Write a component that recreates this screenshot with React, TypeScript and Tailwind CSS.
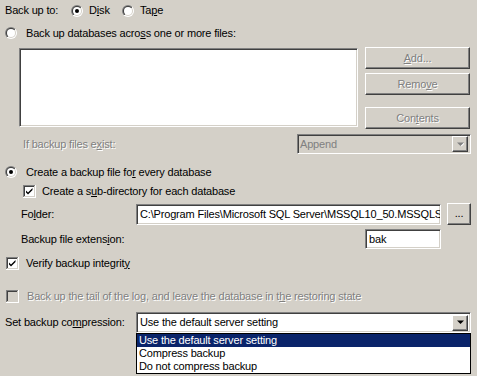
import React from 'react';

const raised =
  'border border-t-white border-l-white border-r-[#404040] border-b-[#404040] shadow-[inset_-1px_-1px_0_#808080]';
const sunken =
  'border border-t-[#808080] border-l-[#808080] border-r-white border-b-white shadow-[inset_1px_1px_0_#404040,inset_-1px_-1px_0_#d4d0c8]';
const dim = 'text-[#808080] [text-shadow:1px_1px_0_#ffffff]';

const U = ({ children }: { children: React.ReactNode }) => <span className="underline underline-offset-[1px]">{children}</span>;

const Radio = ({ checked = false }: { checked?: boolean }) => (
  <svg width="12" height="12" viewBox="0 0 12 12" className="shrink-0">
    <circle cx="6" cy="6" r="6" fill="url(#rOuter)" />
    <circle cx="6" cy="6" r="5" fill="url(#rInner)" />
    <circle cx="6" cy="6" r="4" fill="#ffffff" />
    {checked && <circle cx="6" cy="6" r="2" fill="#000000" />}
  </svg>
);

const Check = ({ checked = false, disabled = false }: { checked?: boolean; disabled?: boolean }) => (
  <svg width="13" height="13" viewBox="0 0 13 13" className="shrink-0">
    <rect x="0" y="0" width="13" height="13" fill="#ffffff" />
    <rect x="0" y="0" width="12" height="12" fill="#808080" />
    <rect x="1" y="1" width="11" height="11" fill="#d4d0c8" />
    <rect x="1" y="1" width="10" height="10" fill="#404040" />
    <rect x="2" y="2" width="9" height="9" fill={disabled ? '#d4d0c8' : '#ffffff'} />
    {checked && <path d="M3 5.5 L5 7.5 L9.5 3 L9.5 5 L5 9.5 L3 7.5 Z" fill="#000000" />}
  </svg>
);

const Arrow = ({ disabled = false }: { disabled?: boolean }) => (
  <div className={`w-[16px] h-[16px] bg-[#d4d0c8] flex items-center justify-center shrink-0 ${raised}`}>
    <svg width="7" height="5" viewBox="0 0 7 5">
      {disabled && <path d="M1.5 1 H8 L4.5 4.5 Z" fill="#ffffff" />}
      <path d="M0 0.5 H7 L3.5 4 Z" fill={disabled ? '#808080' : '#000000'} />
    </svg>
  </div>
);

const Button = ({ children, disabled = false, cls = '' }: { children: React.ReactNode; disabled?: boolean; cls?: string }) => (
  <div className={`bg-[#d4d0c8] flex items-center justify-center ${raised} ${disabled ? dim : 'text-black'} ${cls}`}>
    {children}
  </div>
);

export default function App() {
  return (
    <div
      className="w-[477px] h-[376px] bg-[#d4d0c8] overflow-hidden text-black text-[11px] leading-[13px] tracking-[-0.17px] flex flex-col"
      style={{ fontFamily: '"Liberation Sans", Arial, sans-serif' }}
    >
      <svg width="0" height="0" className="absolute">
        <defs>
          <linearGradient id="rOuter" x1="0" y1="0" x2="1" y2="1">
            <stop offset="0.5" stopColor="#808080" />
            <stop offset="0.5" stopColor="#ffffff" />
          </linearGradient>
          <linearGradient id="rInner" x1="0" y1="0" x2="1" y2="1">
            <stop offset="0.5" stopColor="#404040" />
            <stop offset="0.5" stopColor="#d4d0c8" />
          </linearGradient>
        </defs>
      </svg>

      {/* Back up to */}
      <div className="h-[21px] flex items-center pl-[5px]">
        <span className="w-[66px]">Back up to:</span>
        <div className="w-[51px] flex items-center">
          <Radio checked />
          <span className="ml-[6px]">D<U>i</U>sk</span>
        </div>
        <Radio />
        <span className="ml-[6px]">Ta<U>p</U>e</span>
      </div>

      <div className="mt-[2px] h-[20px] flex items-center pl-[5px]">
        <Radio />
        <span className="ml-[9px]">Back up databases acro<U>s</U>s one or more files:</span>
      </div>

      {/* list + buttons */}
      <div className="mt-[4px] h-[83px] flex">
        <div className={`ml-[19px] mt-[1px] w-[339px] h-[79px] bg-white ${sunken}`} />
        <div className="ml-[7px] w-[105px] flex flex-col">
          <Button disabled cls="h-[22px]"><U>A</U>dd...</Button>
          <Button disabled cls="h-[22px] mt-[4px]">Remo<U>v</U>e</Button>
          <Button disabled cls="h-[22px] mt-[12px]">Con<U>t</U>ents</Button>
        </div>
      </div>

      <div className="mt-[4px] h-[20px] flex items-center justify-between pr-[6px]">
        <span className={`ml-[23px] ${dim}`}>If backup files e<U>x</U>ist:</span>
        <div className={`w-[174px] h-[20px] bg-[#d4d0c8] flex items-center justify-between pl-[2px] pr-[2px] ${sunken}`}>
          <span className="text-[#808080]">Append</span>
          <Arrow disabled />
        </div>
      </div>

      <div className="mt-[8px] h-[20px] flex items-center pl-[5px]">
        <Radio checked />
        <span className="ml-[9px]">Create a backup file fo<U>r</U> every database</span>
      </div>

      <div className="h-[18px] flex items-center pl-[23px]">
        <Check checked />
        <span className="ml-[6px]">Create a s<U>u</U>b-directory for each database</span>
      </div>

      <div className="mt-[3px] h-[22px] flex items-center">
        <span className="pl-[21px] w-[136px]">Fo<U>l</U>der:</span>
        <div className={`w-[305px] h-[21px] bg-white flex items-center pl-[3px] overflow-hidden whitespace-nowrap ${sunken}`}>
          C:\Program Files\Microsoft SQL Server\MSSQL10_50.MSSQLS
        </div>
        <Button cls="ml-[6px] w-[24px] h-[22px] pb-[2px]">...</Button>
      </div>

      <div className="mt-[4px] h-[20px] flex items-center">
        <span className="pl-[21px] w-[365px]">Backup file extens<U>i</U>on:</span>
        <div className={`w-[76px] h-[20px] bg-white flex items-center pl-[3px] ${sunken}`}>bak</div>
      </div>

      <div className="mt-[5px] h-[18px] flex items-center pl-[6px]">
        <Check checked />
        <span className="ml-[7px]">Verify backup integrit<U>y</U></span>
      </div>

      <div className="mt-[15px] h-[19px] flex items-center pl-[6px]">
        <Check disabled />
        <span className={`ml-[8px] ${dim}`}>Back up the tail of the log, and leave the database in t<U>h</U>e restoring state</span>
      </div>

      {/* compression */}
      <div className="mt-[6px] h-[21px] flex items-center relative">
        <span className="pl-[5px] w-[136px]">Set backup co<U>m</U>pression:</span>
        <div className={`w-[335px] h-[21px] bg-white flex items-center justify-between pl-[3px] pr-[2px] ${sunken}`}>
          <span>Use the default server setting</span>
          <Arrow />
        </div>
        <div className="absolute top-full left-[136px] w-[335px] h-[41px] bg-white border border-black flex flex-col">
          <div className="h-[13px] bg-[#0a246a] text-white pl-[2px] leading-[13px]">Use the default server setting</div>
          <div className="h-[13px] pl-[2px] leading-[13px]">Compress backup</div>
          <div className="h-[13px] pl-[2px] leading-[13px]">Do not compress backup</div>
        </div>
      </div>
    </div>
  );
}
